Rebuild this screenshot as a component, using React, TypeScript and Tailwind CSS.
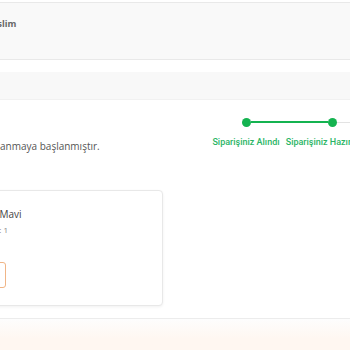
export default function App() {
  return (
    <div className="w-[350px] h-[350px] overflow-hidden bg-white font-['Open_Sans',sans-serif] pt-[2px]">
      {/* Delivery header box */}
      <div className="h-[58px] border-y border-[#e9e9e9] bg-[#f9f9f9] pt-[14px]">
        <p className="-ml-[13px] text-[9px] font-bold text-[#666] leading-[14px]">
          Teslim
        </p>
      </div>

      {/* Empty bar */}
      <div className="mt-[12px] h-[28px] bg-[#f8f8f8] border-b border-[#f1f1f1]" />

      {/* Status row */}
      <div className="flex items-start">
        <p className="mt-[40px] -ml-[75px] w-[220px] shrink-0 text-[10px] text-[#555] leading-[13px] whitespace-nowrap">
          Siparişiniz hazırlanmaya başlanmıştır.
        </p>
        <div className="mt-[17px] ml-[58px] flex shrink-0">
          <div className="flex w-[86px] flex-col items-center">
            <div className="flex h-[10px] w-full items-center">
              <div className="flex-1" />
              <div className="h-[9px] w-[9px] rounded-full bg-[#14b350]" />
              <div className="h-[2px] flex-1 bg-[#14b350]" />
            </div>
            <span className="mt-[9px] whitespace-nowrap font-['Roboto',sans-serif] text-[9px] font-medium text-[#2ab565] leading-[12px]">
              Siparişiniz Alındı
            </span>
          </div>
          <div className="flex w-[86px] flex-col items-center">
            <div className="flex h-[10px] w-full items-center">
              <div className="h-[2px] flex-1 bg-[#14b350]" />
              <div className="h-[9px] w-[9px] rounded-full bg-[#14b350]" />
              <div className="h-[1px] flex-1 bg-[#e3e3e3]" />
            </div>
            <span className="mt-[9px] whitespace-nowrap font-['Roboto',sans-serif] text-[9px] font-medium text-[#2ab565] leading-[12px]">
              Siparişiniz Hazırlanıyor
            </span>
          </div>
        </div>
      </div>

      {/* Product card */}
      <div className="mt-[37px] -ml-[120px] w-[283px] h-[116px] rounded-[4px] border border-[#e8e8e8] bg-white shadow-[0_1px_3px_rgba(0,0,0,0.06)] pl-[120px] pt-[16px]">
        <p className="-ml-[30px] text-[10px] text-[#444] leading-[14px]">
          Renk: Mavi
        </p>
        <p className="-ml-[19px] mt-[3px] text-[8px] text-[#888] leading-[12px]">
          Adet: 1
        </p>
        <div className="-ml-[90px] mt-[26px] w-[95px] h-[26px] rounded-[3px] border border-[#f0b587]" />
      </div>

      {/* Footer */}
      <div className="mt-[12px] border-t border-[#ececec] h-[40px] bg-gradient-to-b from-[#fdfdfd] to-[#fff7f1] to-50%" />
    </div>
  );
}
